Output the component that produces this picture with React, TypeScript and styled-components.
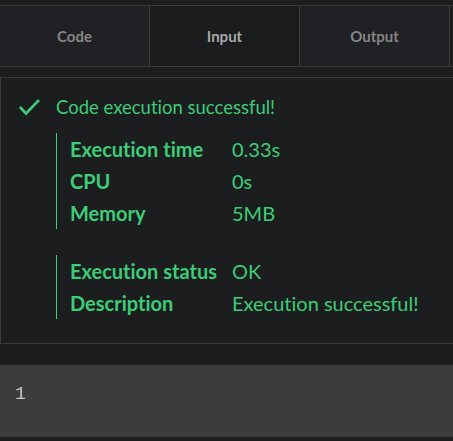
import styled, { createGlobalStyle } from "styled-components";

const Global = createGlobalStyle`
  html, body {
    margin: 0;
    padding: 0;
    background: #1c1d1f;
  }
  body {
    font-family: Lato, "Noto Sans", sans-serif;
    font-variant-ligatures: none;
  }
`;

const Page = styled.div`
  width: 453px;
  height: 441px;
  box-sizing: border-box;
  padding-top: 5px;
  overflow: hidden;
  display: flex;
  flex-direction: column;
`;

const TabBar = styled.div`
  display: flex;
  height: 62px;
  box-sizing: border-box;
  border-top: 1px solid #3a3b3d;
  border-bottom: 1px solid #3a3b3d;
`;

const Tab = styled.div<{ active?: boolean }>`
  width: 150px;
  box-sizing: border-box;
  border-right: 1px solid #3a3b3d;
  background: ${(p) => (p.active ? "#1b1c1e" : "#202124")};
  color: ${(p) => (p.active ? "#a8a8a8" : "#858585")};
  font-size: 15px;
  font-weight: 700;
  display: flex;
  align-items: center;
  justify-content: center;
  padding-bottom: 1px;
`;

const Panel = styled.div`
  margin-top: 10px;
  height: 267px;
  box-sizing: border-box;
  border: 1px solid #3a3b3d;
  border-right: none;
  background: #1c1d1f;
  padding: 17px 0 0 17px;
  color: #3dcc77;
`;

const Headline = styled.div`
  display: flex;
  align-items: center;
  gap: 15px;
  font-size: 18.5px;
  height: 24px;
`;

const Group = styled.div<{ first?: boolean }>`
  margin-left: 38px;
  margin-top: ${(p) => (p.first ? "14px" : "26px")};
  border-left: 1.5px solid #3dcc77;
  padding-left: 13px;
`;

const Row = styled.div`
  display: flex;
  height: 32px;
  align-items: center;
  font-size: 20px;
`;

const Label = styled.span`
  width: 162px;
  font-weight: 700;
`;

const Value = styled.span`
  font-weight: 400;
`;

const InputArea = styled.div`
  margin-top: 21px;
  height: 72px;
  box-sizing: border-box;
  background: #3c3c3c;
  padding: 19px 0 0 15px;
  font-family: "Liberation Mono", monospace;
  font-size: 18px;
  color: #c8c8c8;
`;

const Check = () => (
  <svg width="23" height="18" viewBox="0 0 23 18">
    <polyline
      points="2,9 8,15.5 21,2"
      fill="none"
      stroke="#3dcc77"
      strokeWidth="2.6"
    />
  </svg>
);

export default function App() {
  return (
    <Page>
      <Global />
      <TabBar>
        <Tab>Code</Tab>
        <Tab active>Input</Tab>
        <Tab>Output</Tab>
      </TabBar>
      <Panel>
        <Headline>
          <Check />
          Code execution successful!
        </Headline>
        <Group first>
          <Row>
            <Label>Execution time</Label>
            <Value>0.33s</Value>
          </Row>
          <Row>
            <Label>CPU</Label>
            <Value>0s</Value>
          </Row>
          <Row>
            <Label>Memory</Label>
            <Value>5MB</Value>
          </Row>
        </Group>
        <Group>
          <Row>
            <Label>Execution status</Label>
            <Value>OK</Value>
          </Row>
          <Row>
            <Label>Description</Label>
            <Value>Execution successful!</Value>
          </Row>
        </Group>
      </Panel>
      <InputArea>1</InputArea>
    </Page>
  );
}
